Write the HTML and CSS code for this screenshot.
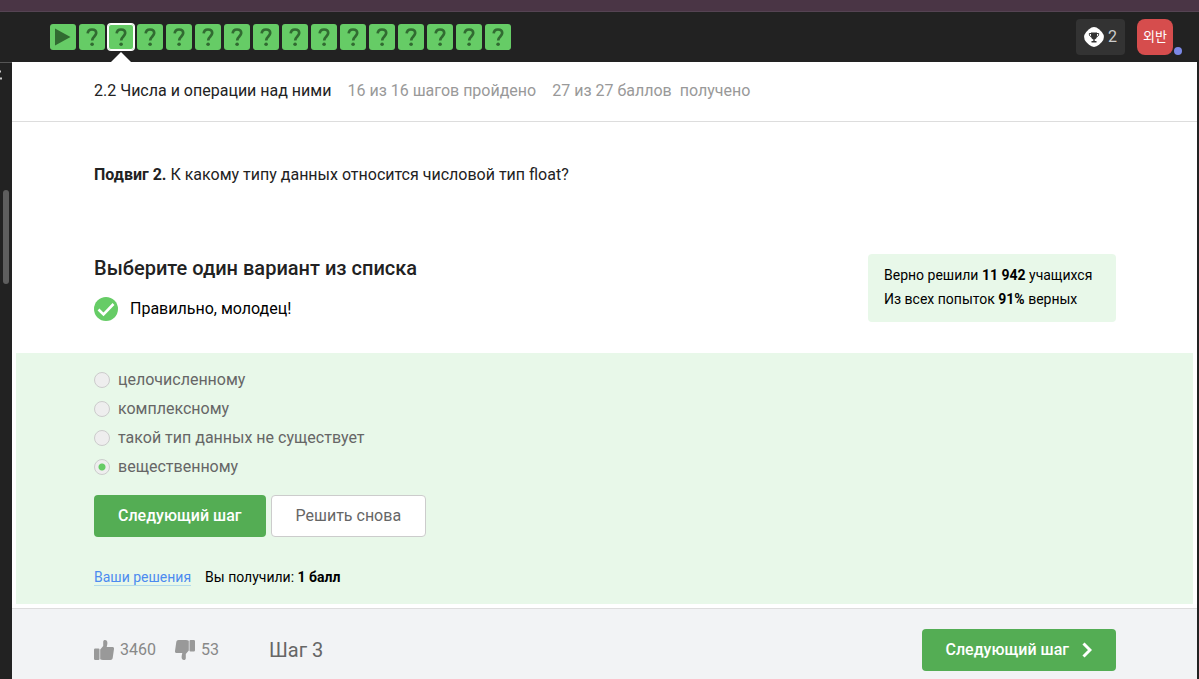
FILE: index.html
```html
<!DOCTYPE html>
<html lang="ru">
<head>
<meta charset="utf-8">
<title>2.2 Числа и операции над ними</title>
<link rel="stylesheet" href="styles.css">
</head>
<body>
<svg class="defs" aria-hidden="true">
  <symbol id="question" viewBox="0 0 26 26"><path d="M8.700 9.400C8.900 6.800 10.400 5.500 13 5.500c2.700 0 4.200 1.400 4.200 3.600 0 3.200-4 3.600-4 7.400" fill="none" stroke="#316b31" stroke-width="2.700"/><circle cx="13.100" cy="20.300" r="1.800" fill="#316b31"/></symbol>
  <symbol id="thumb" viewBox="0 0 20 20"><path d="M1.200 8.500h3.300a1 1 0 0 1 1 1V19a1 1 0 0 1-1 1H1.200A1.200 1.200 0 0 1 0 18.800V9.700a1.200 1.200 0 0 1 1.200-1.200ZM6.200 9.400 9.200 6V2C9.200.6 10 0 11 0c1.500 0 2.400 1.200 2.400 3 0 1.500-.4 2.700-.7 4h5.600c1.200 0 1.900.9 1.700 2l-1.300 9c-.2 1.200-1 2-2.200 2H9c-1.100 0-2.100-.3-2.800-.8Z" fill="#999"/></symbol>
</svg>
<div class="strip"></div>
<header class="topbar">
  <nav class="steps" aria-label="Шаги">
    <a class="step" href="#" aria-label="Шаг 1"><svg viewBox="0 0 26 26"><path d="M5 4.500 20.500 13 5 21.500Z" fill="#316b31"/></svg></a>
    <a class="step" href="#" aria-label="Шаг 2"><svg><use href="#question"/></svg></a>
    <a class="step step-active" href="#" aria-label="Шаг 3" aria-current="step"><svg><use href="#question"/></svg></a>
    <a class="step" href="#" aria-label="Шаг 4"><svg><use href="#question"/></svg></a>
    <a class="step" href="#" aria-label="Шаг 5"><svg><use href="#question"/></svg></a>
    <a class="step" href="#" aria-label="Шаг 6"><svg><use href="#question"/></svg></a>
    <a class="step" href="#" aria-label="Шаг 7"><svg><use href="#question"/></svg></a>
    <a class="step" href="#" aria-label="Шаг 8"><svg><use href="#question"/></svg></a>
    <a class="step" href="#" aria-label="Шаг 9"><svg><use href="#question"/></svg></a>
    <a class="step" href="#" aria-label="Шаг 10"><svg><use href="#question"/></svg></a>
    <a class="step" href="#" aria-label="Шаг 11"><svg><use href="#question"/></svg></a>
    <a class="step" href="#" aria-label="Шаг 12"><svg><use href="#question"/></svg></a>
    <a class="step" href="#" aria-label="Шаг 13"><svg><use href="#question"/></svg></a>
    <a class="step" href="#" aria-label="Шаг 14"><svg><use href="#question"/></svg></a>
    <a class="step" href="#" aria-label="Шаг 15"><svg><use href="#question"/></svg></a>
    <a class="step" href="#" aria-label="Шаг 16"><svg><use href="#question"/></svg></a>
  </nav>
  <div class="account">
    <button class="awards" type="button">
      <svg viewBox="0 0 20 20"><path d="M5 2.200Q10-2 15 2.200L17.800 5Q22 10 17.800 15L15 17.800Q10 22 5 17.800L2.200 15Q-2 10 2.200 5Z" fill="#fff"/><path d="M7 5.500h6v3.500c0 2-1.200 3.400-3 3.400S7 11 7 9ZM9.300 12h1.400v2.500H9.300ZM7.500 14h5v1.500h-5Z" fill="#333"/><path d="M7 6.500H5.300c0 2 .7 3.200 2.200 3.400M13 6.500h1.700c0 2-.7 3.200-2.200 3.400" fill="none" stroke="#333"/></svg>
      <span>2</span>
    </button>
    <button class="avatar" type="button">외반<span class="status"></span></button>
  </div>
</header>
<div class="body">
  <aside class="side"><svg class="side-mark" viewBox="0 0 3 10"><path d="M0 1.500h1M0 8.500h2" stroke="#ccc" stroke-width="2"/></svg><div class="scroll-thumb"></div></aside>
  <main class="main">
    <div class="lesson-head">
      <h1 class="lesson-title">2.2 Числа и операции над ними</h1>
      <span>16 из 16 шагов пройдено</span>
      <span>27 из 27 баллов&nbsp; получено</span>
    </div>
    <p class="question"><b>Подвиг 2.</b> К какому типу данных относится числовой тип float?</p>
    <section class="task-head">
      <div>
        <h2 class="task-title">Выберите один вариант из списка</h2>
        <p class="feedback"><svg viewBox="0 0 24 24"><circle cx="12" cy="12" r="12" fill="#6c6"/><path d="m4.500 12.500 5 5L19.500 7" fill="none" stroke="#fff" stroke-width="2.600"/></svg>Правильно, молодец!</p>
      </div>
      <div class="stats">Верно решили <b>11 942</b> учащихся<br>Из всех попыток <b>91%</b> верных</div>
    </section>
    <form class="quiz">
      <div class="options">
        <label><input type="radio" name="answer" disabled>целочисленному</label>
        <label><input type="radio" name="answer" disabled>комплексному</label>
        <label><input type="radio" name="answer" disabled>такой тип данных не существует</label>
        <label><input type="radio" name="answer" disabled checked>вещественному</label>
      </div>
      <div class="actions">
        <button class="btn btn-primary" type="button">Следующий шаг</button>
        <button class="btn btn-plain" type="button">Решить снова</button>
      </div>
      <div class="result"><a href="#">Ваши решения</a><span>Вы получили: <b>1 балл</b></span></div>
    </form>
    <footer class="footer">
      <button class="vote" type="button" aria-label="Нравится"><svg><use href="#thumb"/></svg>3460</button>
      <button class="vote vote-down" type="button" aria-label="Не нравится"><svg><use href="#thumb"/></svg>53</button>
      <span class="step-name">Шаг 3</span>
      <button class="btn btn-primary btn-next" type="button">Следующий шаг<svg viewBox="0 0 10 16"><path d="m1.500 1.500 6.500 6.500-6.500 6.500" fill="none" stroke="#fff" stroke-width="3"/></svg></button>
    </footer>
  </main>
</div>
</body>
</html>
```
FILE: styles.css
```css
* { box-sizing: border-box; }
body {
  margin: 0;
  min-height: 100vh;
  display: flex;
  flex-direction: column;
  background: #222;
  color: #222;
  font: 16px/24px Roboto, "Noto Sans CJK KR", sans-serif;
}
h1, h2, p { margin: 0; }
button { font: inherit; border: 0; cursor: pointer; }
.defs { display: none; }
.strip { height: 12px; background: #4a3545; border-bottom: 1px solid #554453; }
.topbar {
  display: flex;
  justify-content: space-between;
  align-items: center;
  height: 50px;
  padding: 0 26px 0 50px;
}
.steps { display: flex; gap: 3px; }
.step { position: relative; width: 26px; height: 26px; border-radius: 3px; background: #6c6; }
.step svg { display: block; width: 26px; height: 26px; }
.step-active { box-shadow: inset 0 0 0 1px #fff, 0 0 0 1px #fff; }
.step-active::after {
  content: "";
  position: absolute;
  left: 3px;
  top: 28px;
  border: solid transparent;
  border-width: 0 10px 10px;
  border-bottom-color: #fff;
}
.account { display: flex; gap: 12px; }
.awards {
  display: flex;
  align-items: center;
  gap: 4px;
  height: 36px;
  padding: 0 8px;
  border-radius: 4px;
  background: #333;
  color: #ccc;
}
.awards svg { width: 20px; height: 20px; }
.avatar {
  position: relative;
  width: 36px;
  height: 36px;
  padding: 0;
  border-radius: 8px;
  background: #d64d4d;
  color: #fff;
  font-size: 13px;
}
.status {
  position: absolute;
  right: -9px;
  bottom: 0;
  width: 8px;
  height: 8px;
  border-radius: 50%;
  background: #7b88e6;
}
.body { flex: 1; display: flex; padding-right: 2px; }
.side { width: 12px; border-top: 1px solid #555; }
.side-mark { display: block; width: 3px; height: 10px; margin-top: 7px; }
.scroll-thumb { width: 6px; height: 94px; margin: 110px 0 0 3px; border-radius: 3px; background: #5e5e5e; }
.main { flex: 1; display: flex; flex-direction: column; background: #fff; }
.lesson-head {
  display: flex;
  gap: 16px;
  padding: 17px 81px 18px 82px;
  border-bottom: 1px solid #ddd;
  color: #999;
}
.lesson-title { color: #222; font-size: 16px; font-weight: 400; }
.question { padding: 41px 81px 0 82px; }
.question b { font-weight: 700; }
.task-head {
  display: flex;
  justify-content: space-between;
  padding: 67px 81px 31px 82px;
}
.task-title { font-size: 20px; line-height: 28px; font-weight: 500; }
.feedback { display: flex; align-items: center; gap: 12px; margin-top: 14px; color: #000; line-height: 26px; }
.feedback svg { width: 24px; height: 24px; }
.stats {
  min-width: 248px;
  padding: 9px 16px 11px;
  border-radius: 4px;
  background: #e8f8e9;
  color: #000;
  font-size: 14px;
}
.quiz { margin: 0 4px 4px; padding: 15px 78px 18px; background: #e8f8e9; }
.options { display: flex; flex-direction: column; gap: 5px; color: #666; }
.options label { display: flex; align-items: center; gap: 8px; }
.options input {
  appearance: none;
  width: 16px;
  height: 16px;
  margin: 0;
  border: 1px solid #ccc;
  border-radius: 50%;
  background: #eee;
}
.options input:checked { background: radial-gradient(circle, #6c6 3px, #eee 4px); }
.actions { display: flex; gap: 5px; margin-top: 16px; }
.btn { height: 42px; padding: 0 24px; border-radius: 4px; }
.btn-primary { background: #54ad54; color: #fff; font-weight: 500; }
.btn-plain { border: 1px solid #ccc; background: #fff; color: #666; }
.result { display: flex; gap: 14px; margin-top: 32px; color: #000; font-size: 14px; line-height: 16px; }
.result a { border-bottom: 1px solid #b3dbea; color: #4c8bf0; text-decoration: none; }
.footer {
  flex: 1;
  display: flex;
  align-items: center;
  padding: 20px 81px 8px 82px;
  border-top: 1px solid #ddd;
  background: #f2f3f5;
}
.vote { display: flex; align-items: center; gap: 6px; padding: 0; background: none; color: #888; }
.vote svg { width: 20px; height: 20px; }
.vote-down { margin-left: 19px; }
.vote-down svg { transform: rotate(180deg); }
.step-name { margin-left: 50px; color: #666; font-size: 20px; }
.btn-next { display: flex; align-items: center; gap: 13px; margin-left: auto; }
.btn-next svg { width: 10px; height: 16px; }
```
